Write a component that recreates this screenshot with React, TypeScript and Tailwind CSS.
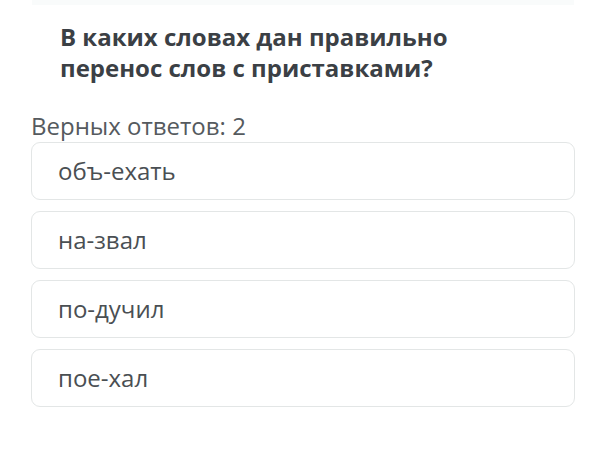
export default function App() {
  const opts = ["объ-ехать", "на-звал", "по-дучил", "пое-хал"];
  return (
    <div className="w-[606px] h-[454px] bg-white overflow-hidden" style={{ fontFamily: '"Open Sans", sans-serif' }}>
      <div className="mx-[32px] h-[5px] bg-[#f9fbfb]" />
      <div className="pl-[60px] pt-[16px] pr-[30px] text-[24px] leading-[31px] font-bold text-[#3b4045]">
        В каких словах дан правильно<br />перенос слов с приставками?
      </div>
      <div className="pl-[31px] pt-[29px] text-[24px] leading-[28px] text-[#555a5e]">Верных ответов: 2</div>
      <div className="flex flex-col gap-[11px] mx-[31px] mt-[2px]">
        {opts.map((o) => (
          <div key={o} className="h-[58px] rounded-[9px] border-[1.5px] border-[#e3e6e6] flex items-center pl-[26px] text-[24px] text-[#4a4f53]">
            {o}
          </div>
        ))}
      </div>
    </div>
  );
}
